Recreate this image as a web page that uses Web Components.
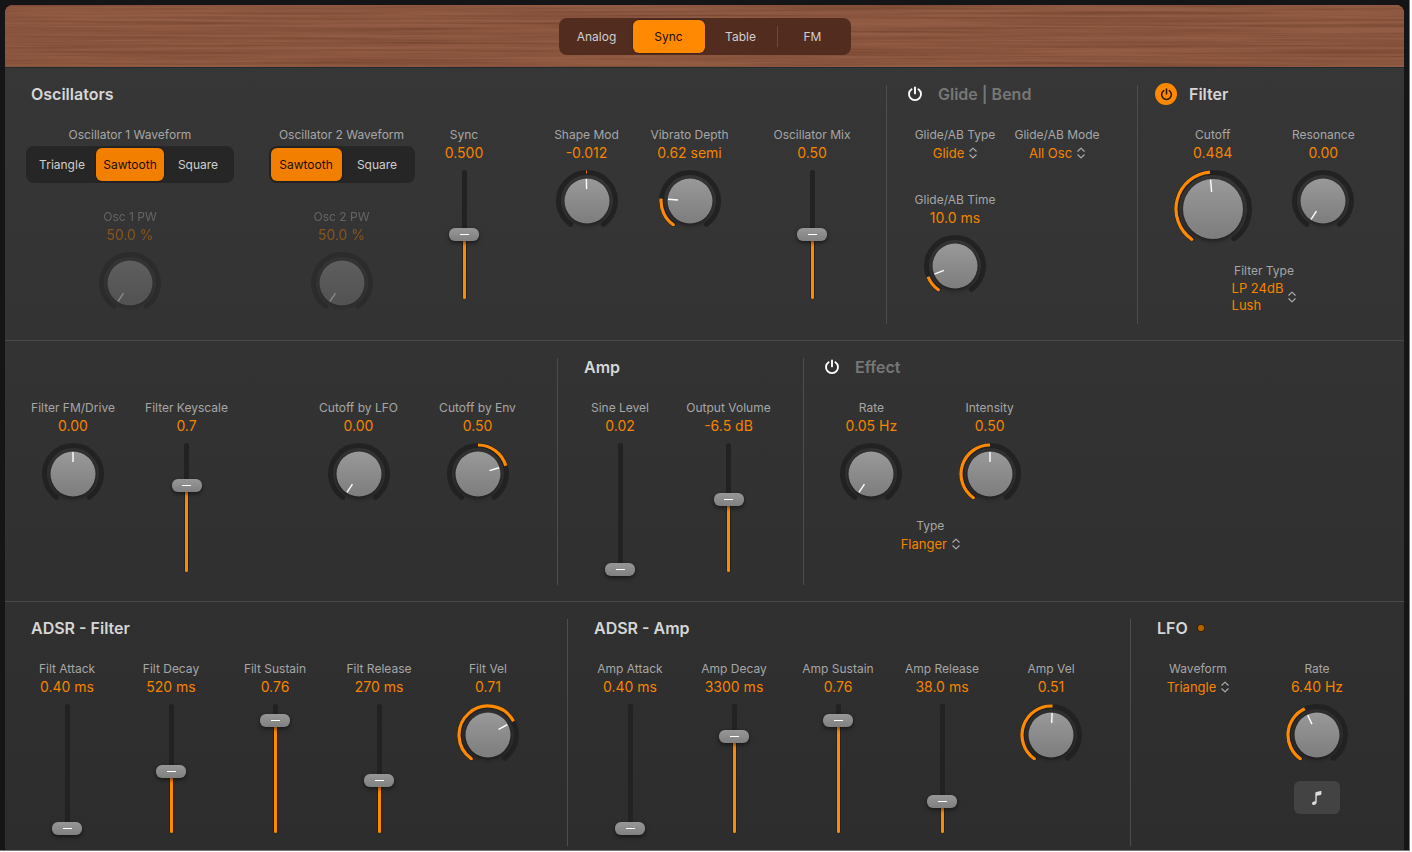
<!DOCTYPE html>
<html lang="en">
<head>
<meta charset="utf-8">
<title>Synth</title>
<style>
body { margin: 0; background: #fff; font-family: Inter, "Liberation Sans", sans-serif; }
</style>
</head>
<body>
<synth-app></synth-app>
<script>
const POWER = `<svg class="power" viewBox="0 0 16 16" width="16" height="16" aria-hidden="true" fill="none" stroke="currentColor" stroke-width="1.9" stroke-linecap="round"><path d="M4.6 3.2A6 6 0 1 0 11.4 3.2"/><path d="M8 1.4V7.4"/></svg>`;

function attach(host, html) {
  const t = document.createElement('template');
  t.innerHTML = html;
  const root = host.attachShadow({ mode: 'open' });
  root.appendChild(t.content.cloneNode(true));
  return root;
}

/* Label and value shared by all the parameter controls */
const PARAM = `
:host { display: flex; flex-direction: column; align-items: center; min-width: 0; color: #a6a6a6; }
:host([disabled]) { opacity: .42; }
label { font-size: 12px; line-height: 18px; white-space: nowrap; }
output { font-size: 14px; line-height: 18px; color: #f58400; white-space: nowrap; margin-bottom: 8px; }`;

class SynthKnob extends HTMLElement {
  connectedCallback() {
    if (this.shadowRoot) return;
    const big = this.hasAttribute('big');
    const s = big ? 78 : 62, c = s / 2, r = c - 2.5;
    const pos = +this.getAttribute('pos');
    const from = this.hasAttribute('from') ? +this.getAttribute('from') : 0;
    const ang = p => -147 + p * 294;
    const pt = (a, rad) => {
      const t = a * Math.PI / 180;
      return (c + rad * Math.sin(t)).toFixed(2) + ' ' + (c - rad * Math.cos(t)).toFixed(2);
    };
    const arc = (a, b, rad) => `M${pt(a, rad)}A${rad} ${rad} 0 ${b - a > 180 ? 1 : 0} 1 ${pt(b, rad)}`;
    let lit = '';
    if (pos !== from) {
      const a = Math.max(-145, Math.min(ang(pos), ang(from)));
      const b = Math.max(ang(pos), ang(from));
      lit = `<path d="${arc(a, b, r + .5)}" fill="none" stroke="#ff8900" stroke-width="3.2"/>`;
      if (from === 0) lit += `<circle cx="${pt(a, r + .5).split(' ')[0]}" cy="${pt(a, r + .5).split(' ')[1]}" r="1.6" fill="#ff8900"/>`;
    }
    const kr = big ? 30 : 22.5, p0 = pt(ang(pos), kr - (big ? 13 : 10.5)).split(' '), p1 = pt(ang(pos), kr - .5).split(' ');
    attach(this, `<style>${PARAM}
.dial { display: grid; width: ${s}px; height: ${s}px; }
.dial > * { grid-area: 1 / 1; }
.cap { filter: drop-shadow(0 2px 2px rgba(0,0,0,.45)); }
input { margin: 0; opacity: 0; width: 100%; height: 100%; cursor: pointer; }
</style>
<label for="i">${this.getAttribute('label')}</label>
<output for="i">${this.getAttribute('value')}</output>
<div class="dial">
<svg width="${s}" height="${s}" viewBox="0 0 ${s} ${s}" aria-hidden="true">
<defs><linearGradient id="g" x2="0" y2="1"><stop offset="0" stop-color="#999"/><stop offset="1" stop-color="#7d7d7d"/></linearGradient></defs>
<path d="${arc(-145, 145, r)}" fill="none" stroke="#222" stroke-width="5" stroke-linecap="round"/>
${lit}
<circle class="cap" cx="${c}" cy="${c}" r="${kr}" fill="url(#g)"/>
<line x1="${p0[0]}" y1="${p0[1]}" x2="${p1[0]}" y2="${p1[1]}" stroke="#fff" stroke-width="1.4"/>
</svg>
<input id="i" type="range" min="0" max="1" step="0.001" value="${pos}"${this.hasAttribute('disabled') ? ' disabled' : ''}>
</div>`);
  }
}

class SynthFader extends HTMLElement {
  connectedCallback() {
    if (this.shadowRoot) return;
    const pos = +this.getAttribute('pos');
    attach(this, `<style>${PARAM}
.lane { display: grid; width: 30px; height: 129px; align-items: center; justify-items: center; }
.lane > * { grid-area: 1 / 1; }
.track { display: flex; align-items: flex-end; justify-content: center; width: 5px; height: 129px; border-radius: 3px; background: #222; }
.fill { width: 3px; height: calc(${pos} * 124px); border-radius: 0 0 2px 2px; background: #ff8900; }
input { appearance: none; writing-mode: vertical-lr; direction: rtl; width: 30px; height: 137px; margin: -4px 0; background: none; cursor: pointer; }
input::-webkit-slider-runnable-track { appearance: none; width: 30px; background: none; }
input::-webkit-slider-thumb {
  appearance: none; width: 30px; height: 13px; border: 0; border-radius: 6px;
  background: linear-gradient(#fff, #fff) center / 9px 1px no-repeat, linear-gradient(#979797, #808080);
  box-shadow: 0 2px 4px rgba(0,0,0,.5);
}
</style>
<label for="i">${this.getAttribute('label')}</label>
<output for="i">${this.getAttribute('value')}</output>
<div class="lane">
<div class="track"><div class="fill"></div></div>
<input id="i" type="range" min="0" max="1" step="0.001" value="${pos}">
</div>`);
  }
}

class SynthSelect extends HTMLElement {
  connectedCallback() {
    if (this.shadowRoot) return;
    const v = this.getAttribute('value'), wrap = this.hasAttribute('wrap');
    attach(this, `<style>${PARAM}
.box { display: grid; grid-template-columns: auto 8px; column-gap: 5px; align-items: center; color: #f58400; font-size: 13px; line-height: 17px; }
select { grid-area: 1 / 1 / 2 / 3; z-index: 1; appearance: none; box-sizing: border-box; margin: 0; padding: 0 13px 0 0; border: 0; background: none; color: inherit; font: inherit; height: 18px; field-sizing: content; cursor: pointer; }
:host([wrap]) select { opacity: 0; width: 0; min-width: 100%; height: 100%; field-sizing: fixed; }
.shown { grid-area: 1 / 1; width: min-content; }
svg { grid-area: 1 / 2; }
</style>
<label for="s">${this.getAttribute('label')}</label>
<div class="box">
${wrap ? `<span class="shown" aria-hidden="true">${v.replace(' ', '\u00a0')}</span>` : ''}
<select id="s"><option selected>${v}</option></select>
<svg width="8" height="12" viewBox="0 0 8 12" fill="none" stroke="#aaa" stroke-width="1.2" stroke-linecap="round" stroke-linejoin="round" aria-hidden="true"><path d="M.8 4.2 4 1.1 7.2 4.2M.8 7.8 4 10.9 7.2 7.8"/></svg>
</div>`);
  }
}

class SynthSegments extends HTMLElement {
  connectedCallback() {
    if (this.shadowRoot) return;
    const on = this.getAttribute('value'), title = this.getAttribute('label');
    const opts = this.getAttribute('options').split(',');
    const at = opts.indexOf(on);
    attach(this, `<style>
:host { display: flex; flex-direction: column; align-items: center; min-width: 0; color: #a6a6a6; }
fieldset { display: contents; }
legend { padding: 0; margin: 0 0 2px; font-size: 12px; line-height: 18px; white-space: nowrap; }
.bar { display: grid; grid-auto-flow: column; grid-auto-columns: var(--seg, 68px); height: 33px; padding: 2px; border-radius: 8px; background: var(--bar, #262626); color: #cfcfcf; }
label { display: grid; place-items: center; border-radius: 6px; font-size: 12px; cursor: pointer; }
label > * { grid-area: 1 / 1; }
input { opacity: 0; margin: 0; width: 100%; height: 100%; }
label:has(:checked) { background: var(--on, #f27f00); color: #1c0e00; box-shadow: 0 0 2px rgba(0,0,0,.5); }
.split { background: linear-gradient(#6b493c, #6b493c) left center / 1px 21px no-repeat; }
</style>
<fieldset${title ? '' : ' aria-label="Engine"'}>${title ? `<legend>${title}</legend>` : ''}
<div class="bar">${opts.map((o, i) => `<label class="${i > at + 1 ? 'split' : ''}"><input type="radio" name="r"${o === on ? ' checked' : ''}><span>${o}</span></label>`).join('')}</div>
</fieldset>`);
  }
}

class SynthSection extends HTMLElement {
  connectedCallback() {
    if (this.shadowRoot) return;
    const h = this.getAttribute('heading') || '', p = this.getAttribute('power');
    attach(this, `<style>
:host { display: block; min-width: 0; border-left: 1px solid #4d4d4d; box-sizing: border-box; padding-bottom: var(--foot, 13px); }
:host(:first-child) { border-left: 0; }
header { display: flex; align-items: center; height: 18px; padding-left: 26px; margin-bottom: 23px; }
:host([power]) header { padding-left: 17px; gap: 12px; }
h2 { margin: 0; font-size: 16px; line-height: 18px; font-weight: 600; color: #d6d6d6; white-space: nowrap; }
:host([power=off]) h2 { color: #777; }
button { display: grid; place-items: center; width: 22px; height: 22px; border: 0; border-radius: 50%; padding: 0; background: none; color: #fff; cursor: pointer; }
:host([power=on]) button { background: #ff8900; color: #2b1600; }
:host([power=on]) .power { width: 13px; height: 13px; }
.led { width: 6px; height: 6px; border-radius: 50%; background: #b96300; margin-left: 10px; box-shadow: 0 0 0 1px #3d2508; }
.body { display: grid; grid-template-columns: var(--cols); row-gap: var(--rows, 0); align-items: start; }
</style>
<header>
${p ? `<button type="button" aria-label="${h}" aria-pressed="${p === 'on'}">${POWER}</button>` : ''}
${h ? `<h2>${h}</h2>` : ''}
${this.hasAttribute('led') ? '<span class="led"></span>' : ''}
</header>
<div class="body"><slot></slot></div>`);
  }
}

class SyncButton extends HTMLElement {
  connectedCallback() {
    if (this.shadowRoot) return;
    attach(this, `<style>
:host { display: flex; justify-content: center; }
button { display: grid; place-items: center; width: 46px; height: 33px; border: 0; border-radius: 6px; padding: 0; background: #434343; color: #ddd; cursor: pointer; }
</style>
<button type="button" aria-label="Tempo sync"><svg width="12" height="16" viewBox="0 0 12 16" fill="currentColor" aria-hidden="true"><path d="M4.3 3.1Q4.3 2.1 5.3 1.9L9.6.9Q10.4.7 10.4 1.5V4Q10.4 4.7 9.7 4.9L5.7 5.8V12Q5.7 14.7 3.2 15.1 1 15.3 1 13.5 1 12 2.7 11.6L4.3 11.2Z"/></svg></button>`);
  }
}

class SynthApp extends HTMLElement {
  connectedCallback() {
    if (this.shadowRoot) return;
    attach(this, `<style>
:host { display: block; background: #151517; padding: 5px 5px 0; margin-right: 2px; border: solid #777; border-width: 0 1px 1px 0; }
.panel { border-radius: 8px 8px 0 0; overflow: hidden; background: linear-gradient(#373737, #2d2d2d); }
.wood { display: grid; place-items: center; height: 62px; border-bottom: 1px solid #252a2c; background: #8a563e; }
.wood > * { grid-area: 1 / 1; }
.wood svg { width: 100%; height: 62px; display: block; }
.wood synth-segments { --seg: 72px; --bar: #522c1f; --on: #ff8900; z-index: 1; }
.row { display: grid; padding: 17px 0 16px; border-bottom: 1px solid #4a4a4a; }
.r1 { grid-template-columns: 881fr 251fr 267fr; --foot: 10px; }
.r2 { grid-template-columns: 552fr 246fr 601fr; }
.r3 { grid-template-columns: 562fr 563fr 274fr; padding-bottom: 4px; border-bottom: 0; }
.osc { --cols: 250fr 173fr 72fr 32fr 109fr 97fr 148fr; --rows: 25px; }
.osc > .osc1 { grid-area: 1 / 1; }
.osc > .osc2 { grid-area: 1 / 2; --seg: 71px; }
.osc > .sync { grid-area: 1 / 3 / 3 / 4; }
.osc > .shape { grid-area: 1 / 5 / 3 / 6; }
.osc > .vib { grid-area: 1 / 6 / 3 / 7; }
.osc > .mix { grid-area: 1 / 7 / 3 / 8; }
.osc > .pw1 { grid-area: 2 / 1; }
.osc > .pw2 { grid-area: 2 / 2; }
.glide { --cols: 136fr 68fr 46fr; --rows: 29px; }
.glide > .time { grid-area: 2 / 1; }
.filter { --cols: 150fr 72fr 31fr 14fr; --rows: 14px; }
.mod { --cols: 136fr 91fr 67fr 119fr 119fr 20fr; }
.mod > .lfo { grid-column: 4; }
.amp { --cols: 124fr 93fr 28fr; }
.effect { --cols: 135fr 102fr 16fr 348fr; --rows: 12px; }
.under { grid-area: 2 / 1 / 3 / 4; }
.adsr { --cols: 10fr 104fr 104fr 104fr 104fr 114fr 22fr; }
.adsr > :first-child { grid-column: 2; }
.lfo-sec { --cols: 134fr 104fr 35fr; --rows: 15px; }
.lfo-sec > sync-button { grid-area: 2 / 2; }
</style>
<main class="panel">
<div class="wood">
<svg preserveAspectRatio="none" aria-hidden="true"><filter id="w" x="0" y="0" width="100%" height="100%" color-interpolation-filters="sRGB"><feTurbulence type="fractalNoise" baseFrequency="0.004 0.4" numOctaves="4" seed="4"/><feColorMatrix values="0 0 0 0 .33  0 0 0 0 .17  0 0 0 0 .1  .7 0 0 0 -.22"/></filter><rect width="100%" height="100%" fill="#925b43"/><rect width="100%" height="100%" filter="url(#w)"/></svg>
<synth-segments options="Analog,Sync,Table,FM" value="Sync"></synth-segments>
</div>
<div class="row r1">
<synth-section class="osc" heading="Oscillators">
<synth-segments class="osc1" label="Oscillator 1 Waveform" options="Triangle,Sawtooth,Square" value="Sawtooth"></synth-segments>
<synth-segments class="osc2" label="Oscillator 2 Waveform" options="Sawtooth,Square" value="Sawtooth"></synth-segments>
<synth-fader class="sync" label="Sync" value="0.500" pos="0.5"></synth-fader>
<synth-knob class="shape" label="Shape Mod" value="-0.012" pos="0.494" from="0.5"></synth-knob>
<synth-knob class="vib" label="Vibrato Depth" value="0.62 semi" pos="0.21"></synth-knob>
<synth-fader class="mix" label="Oscillator Mix" value="0.50" pos="0.5"></synth-fader>
<synth-knob class="pw1" disabled label="Osc 1 PW" value="50.0 %" pos="0"></synth-knob>
<synth-knob class="pw2" disabled label="Osc 2 PW" value="50.0 %" pos="0"></synth-knob>
</synth-section>
<synth-section class="glide" heading="Glide | Bend" power="off">
<synth-select label="Glide/AB Type" value="Glide"></synth-select>
<synth-select label="Glide/AB Mode" value="All Osc"></synth-select>
<synth-knob class="time" label="Glide/AB Time" value="10.0 ms" pos="0.12"></synth-knob>
</synth-section>
<synth-section class="filter" heading="Filter" power="on">
<synth-knob big label="Cutoff" value="0.484" pos="0.484"></synth-knob>
<synth-knob label="Resonance" value="0.00" pos="0"></synth-knob>
<synth-select class="under" wrap label="Filter Type" value="LP 24dB Lush"></synth-select>
</synth-section>
</div>
<div class="row r2">
<synth-section class="mod">
<synth-knob label="Filter FM/Drive" value="0.00" pos="0.5" from="0.5"></synth-knob>
<synth-fader label="Filter Keyscale" value="0.7" pos="0.677"></synth-fader>
<synth-knob class="lfo" label="Cutoff by LFO" value="0.00" pos="0"></synth-knob>
<synth-knob label="Cutoff by Env" value="0.50" pos="0.75" from="0.5"></synth-knob>
</synth-section>
<synth-section class="amp" heading="Amp">
<synth-fader label="Sine Level" value="0.02" pos="0.004"></synth-fader>
<synth-fader label="Output Volume" value="-6.5 dB" pos="0.565"></synth-fader>
</synth-section>
<synth-section class="effect" heading="Effect" power="off">
<synth-knob label="Rate" value="0.05 Hz" pos="0"></synth-knob>
<synth-knob label="Intensity" value="0.50" pos="0.5"></synth-knob>
<synth-select class="under" label="Type" value="Flanger"></synth-select>
</synth-section>
</div>
<div class="row r3">
<synth-section class="adsr" heading="ADSR - Filter">
<synth-fader label="Filt Attack" value="0.40 ms" pos="0.016"></synth-fader>
<synth-fader label="Filt Decay" value="520 ms" pos="0.472"></synth-fader>
<synth-fader label="Filt Sustain" value="0.76" pos="0.891"></synth-fader>
<synth-fader label="Filt Release" value="270 ms" pos="0.4"></synth-fader>
<synth-knob label="Filt Vel" value="0.71" pos="0.71"></synth-knob>
</synth-section>
<synth-section class="adsr" heading="ADSR - Amp">
<synth-fader label="Amp Attack" value="0.40 ms" pos="0.016"></synth-fader>
<synth-fader label="Amp Decay" value="3300 ms" pos="0.762"></synth-fader>
<synth-fader label="Amp Sustain" value="0.76" pos="0.891"></synth-fader>
<synth-fader label="Amp Release" value="38.0 ms" pos="0.23"></synth-fader>
<synth-knob label="Amp Vel" value="0.51" pos="0.51"></synth-knob>
</synth-section>
<synth-section class="lfo-sec" heading="LFO" led>
<synth-select label="Waveform" value="Triangle"></synth-select>
<synth-knob label="Rate" value="6.40 Hz" pos="0.415"></synth-knob>
<sync-button></sync-button>
</synth-section>
</div>
</main>`);
  }
}

customElements.define('synth-knob', SynthKnob);
customElements.define('synth-fader', SynthFader);
customElements.define('synth-select', SynthSelect);
customElements.define('synth-segments', SynthSegments);
customElements.define('synth-section', SynthSection);
customElements.define('sync-button', SyncButton);
customElements.define('synth-app', SynthApp);
</script>
</body>
</html>
